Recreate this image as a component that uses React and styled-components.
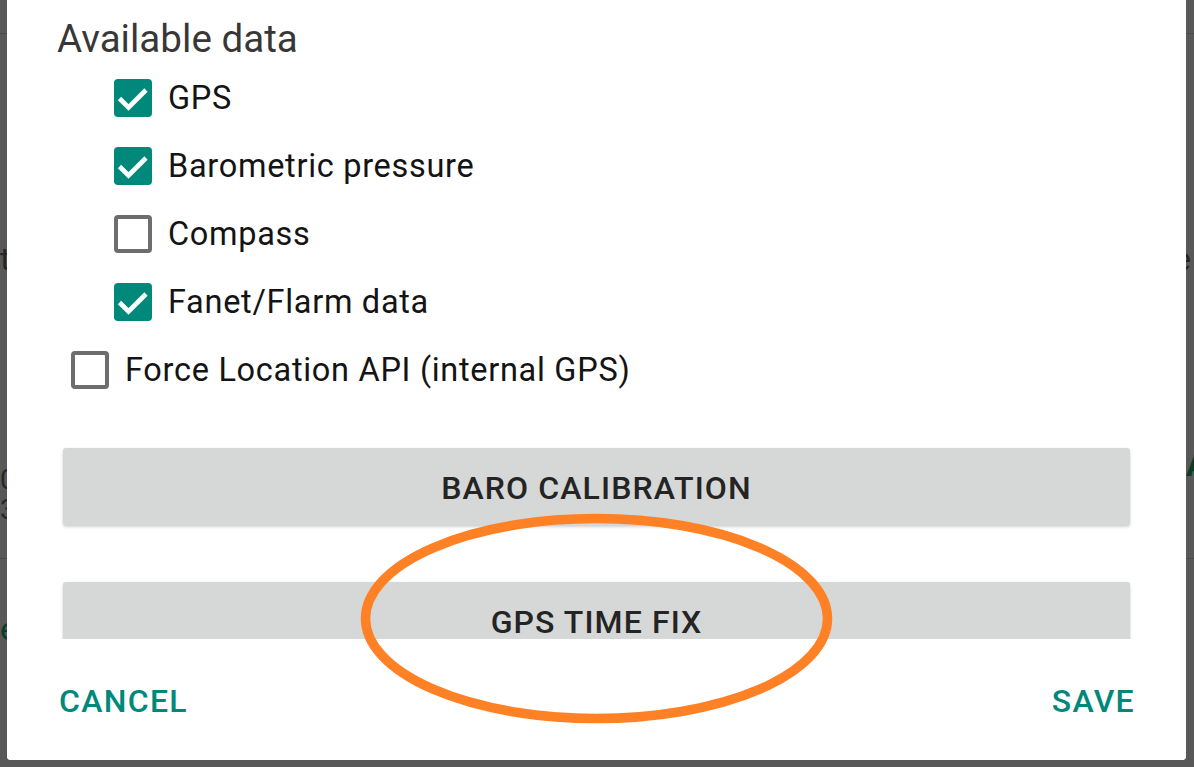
import React from "react";
import styled, { createGlobalStyle } from "styled-components";

const GlobalStyle = createGlobalStyle`
  html, body, #root { margin: 0; padding: 0; height: 100%; }
  body {
    background: #585858;
    font-family: Roboto, "Noto Sans", "Liberation Sans", sans-serif;
    overflow: hidden;
  }
  * { box-sizing: border-box; }
`;

/* ---------- dimmed page underneath ---------- */
const Page = styled.div`
  height: 767px;
  display: flex;
  flex-direction: column;
  color: #262626;
`;
const PageHeader = styled.div`
  height: 34px;
  flex: none;
  border-bottom: 1px solid #4a4a4a;
`;
const PageRow = styled.div`
  display: flex;
  justify-content: space-between;
  align-items: ${(p) => p.$align || "center"};
  margin-top: ${(p) => p.$gap}px;
  height: ${(p) => p.$h}px;
  flex: none;
`;
const PageText = styled.div`
  font-size: ${(p) => p.$size || 32}px;
  line-height: ${(p) => p.$lh || 40}px;
  font-weight: ${(p) => (p.$bold ? 700 : 400)};
  color: ${(p) => (p.$green ? "#0b3d25" : "#262626")};
  padding: ${(p) => p.$pad || "0"};
  white-space: nowrap;
`;
const EdgeClip = styled.div`
  width: 8px;
  overflow: hidden;
  flex: none;
`;
const PageDivider = styled.div`
  height: 1px;
  background: #4a4a4a;
  flex: none;
  margin-top: ${(p) => p.$gap}px;
`;

/* ---------- dialog ---------- */
const Dialog = styled.div`
  position: fixed;
  left: 7px;
  right: 8px;
  top: 0;
  bottom: 7px;
  background: #ffffff;
  border-radius: 0 0 4px 4px;
  display: flex;
  flex-direction: column;
  overflow: hidden;
`;
const ScrollArea = styled.div`
  flex: 1;
  overflow: hidden;
  padding: 16px 56px 0 50px;
`;
const Title = styled.div`
  font-size: 38.6px;
  line-height: 46px;
  margin-bottom: 2px;
  color: rgba(0, 0, 0, 0.8);
`;
const CheckRow = styled.div`
  display: flex;
  align-items: center;
  height: 68px;
  padding-left: ${(p) => (p.$nested ? 57 : 14)}px;
  gap: 16px;
`;
const Box = styled.div`
  width: 38px;
  height: 38px;
  flex: none;
  border-radius: 4px;
  display: flex;
  align-items: center;
  justify-content: center;
  background: ${(p) => (p.$checked ? "#00897b" : "#ffffff")};
  border: ${(p) => (p.$checked ? "none" : "4px solid #6d6d6d")};
`;
const Label = styled.span`
  font-size: 32.5px;
  line-height: 40px;
  color: #141414;
  letter-spacing: 0.7px;
  white-space: nowrap;
`;
const ButtonStack = styled.div`
  display: flex;
  flex-direction: column;
  gap: 57px;
  margin-top: 44px;
  padding-left: 6px;
`;
const RaisedButton = styled.div`
  height: 77px;
  background: #d6d7d7;
  border-radius: 3px;
  box-shadow: 0 2px 3px rgba(0, 0, 0, 0.18), 0 0 2px rgba(0, 0, 0, 0.06);
  display: flex;
  align-items: center;
  justify-content: center;
  padding-top: 2px;
  font-size: 32px;
  font-weight: 500;
  letter-spacing: 1.1px;
  color: #242424;
`;
const Footer = styled.div`
  height: 121px;
  flex: none;
  display: flex;
  align-items: center;
  justify-content: space-between;
  padding: 2px 51px 0 52px;
  background: #ffffff;
`;
const TextButton = styled.span`
  font-size: 32px;
  font-weight: 500;
  letter-spacing: 1.3px;
  color: #00897b;
`;
const Annotation = styled.svg`
  position: fixed;
  left: 356px;
  top: 509px;
  pointer-events: none;
`;

function Check() {
  return (
    <svg width="38" height="38" viewBox="0 0 38 38">
      <path
        d="M5.5 19.5 L14.5 28.5 L32 11"
        fill="none"
        stroke="#ffffff"
        strokeWidth="4.6"
        strokeLinecap="butt"
        strokeLinejoin="miter"
      />
    </svg>
  );
}

function CheckItem({ checked, nested, children }) {
  return (
    <CheckRow $nested={nested}>
      <Box $checked={checked}>{checked && <Check />}</Box>
      <Label>{children}</Label>
    </CheckRow>
  );
}

export default function App() {
  return (
    <>
      <GlobalStyle />
      <Page>
        <PageHeader />
        <PageRow $gap={205} $h={40}>
          <PageText>tion</PageText>
          <PageText $pad="0 3px 0 0">Cable</PageText>
        </PageRow>
        <PageRow $gap={166} $h={85} $align="flex-start">
          <PageText $size={28} $lh={30} $pad="20px 0 0 0">
            0
            <br />
            3
          </PageText>
          <EdgeClip>
            <PageText $green $bold $size={32} $lh={40}>
              AGL
            </PageText>
          </EdgeClip>
        </PageRow>
        <PageDivider $gap={28} />
        <PageRow $gap={50} $h={40}>
          <PageText $green>e</PageText>
          <PageText />
        </PageRow>
      </Page>

      <Dialog>
        <ScrollArea>
          <Title>Available data</Title>
          <CheckItem checked nested>GPS</CheckItem>
          <CheckItem checked nested>Barometric pressure</CheckItem>
          <CheckItem nested>Compass</CheckItem>
          <CheckItem checked nested>Fanet/Flarm data</CheckItem>
          <CheckItem>Force Location API (internal GPS)</CheckItem>
          <ButtonStack>
            <RaisedButton>BARO CALIBRATION</RaisedButton>
            <RaisedButton>GPS TIME FIX</RaisedButton>
          </ButtonStack>
        </ScrollArea>
        <Footer>
          <TextButton>CANCEL</TextButton>
          <TextButton>SAVE</TextButton>
        </Footer>
      </Dialog>

      <Annotation width="482" height="220" viewBox="0 0 482 220">
        <ellipse
          cx="240.5"
          cy="109.5"
          rx="231"
          ry="100"
          fill="none"
          stroke="#ff8126"
          strokeWidth="9.5"
        />
      </Annotation>
    </>
  );
}
